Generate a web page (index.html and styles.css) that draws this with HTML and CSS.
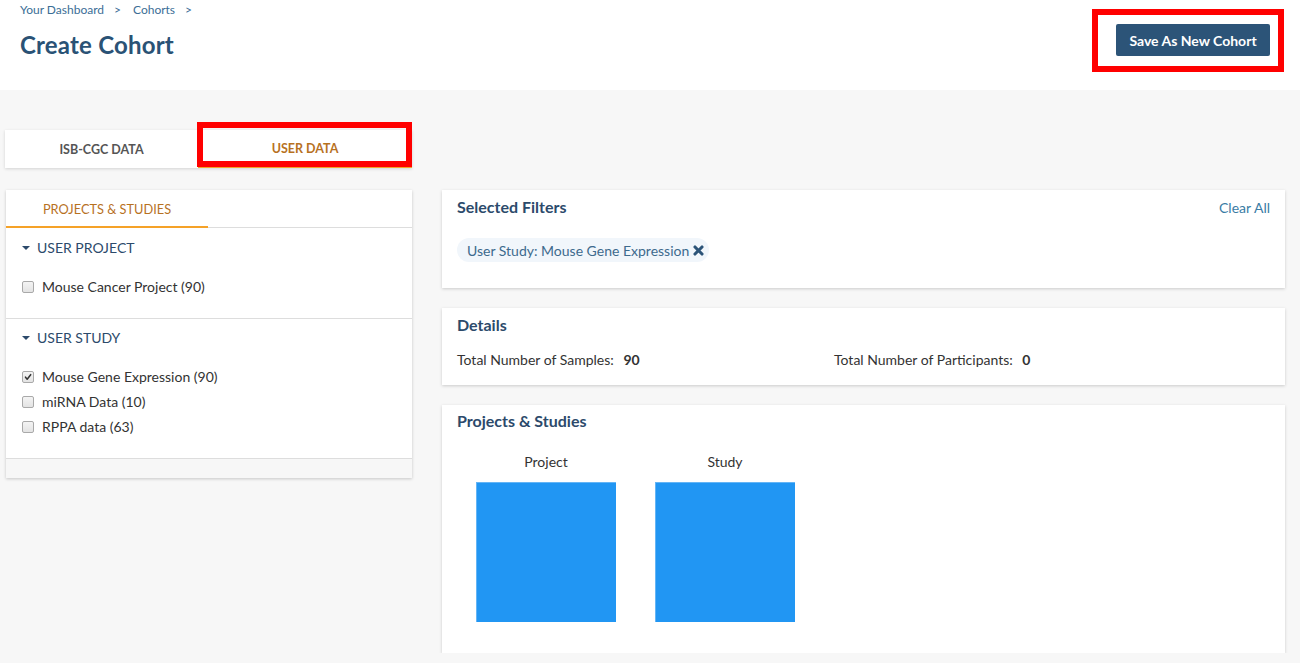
FILE: index.html
```html
<!DOCTYPE html>
<html lang="en">
<head>
<meta charset="utf-8">
<title>Create Cohort</title>
<link rel="stylesheet" href="styles.css">
</head>
<body>
<header class="page-header">
  <div class="header-left">
    <nav class="breadcrumb">
      <a href="#">Your Dashboard</a><span class="sep">&gt;</span><a href="#">Cohorts</a><span class="sep">&gt;</span>
    </nav>
    <h1 class="page-title">Create Cohort</h1>
  </div>
  <div class="header-actions">
    <button class="btn-save" type="button">Save As New Cohort</button>
  </div>
</header>

<main class="main">
  <div class="data-tabs">
    <div class="data-tab">ISB-CGC DATA</div>
    <div class="data-tab active">USER DATA</div>
  </div>

  <div class="columns">
    <section class="filter-panel">
      <div class="panel-tabs">
        <div class="panel-tab active">PROJECTS &amp; STUDIES</div>
      </div>

      <div class="filter-section">
        <div class="section-head"><span class="caret"></span>USER PROJECT</div>
        <ul class="check-list">
          <li><span class="cbox"></span>Mouse Cancer Project (90)</li>
        </ul>
      </div>

      <div class="filter-section">
        <div class="section-head"><span class="caret"></span>USER STUDY</div>
        <ul class="check-list">
          <li><span class="cbox checked"><svg viewBox="0 0 12 12" width="12" height="12"><path d="M3 6.2 L5 8.6 L9.2 3.2" fill="none" stroke="#333" stroke-width="1.8" stroke-linecap="round" stroke-linejoin="round"/></svg></span>Mouse Gene Expression (90)</li>
          <li><span class="cbox"></span>miRNA Data (10)</li>
          <li><span class="cbox"></span>RPPA data (63)</li>
        </ul>
      </div>
      <div class="panel-foot"></div>
    </section>

    <div class="right-col">
      <section class="card card-filters">
        <div class="card-head">
          <h2 class="card-title">Selected Filters</h2>
          <a href="#" class="clear-all">Clear All</a>
        </div>
        <div class="pills">
          <span class="pill">User Study: Mouse Gene Expression
            <svg class="pill-x" viewBox="0 0 10 10" width="11" height="11"><path d="M1.8 1.8 L8.2 8.2 M8.2 1.8 L1.8 8.2" stroke="#2c5478" stroke-width="2.8" stroke-linecap="round"/></svg>
          </span>
        </div>
      </section>

      <section class="card card-details">
        <h2 class="card-title">Details</h2>
        <div class="detail-row">
          <div class="detail">Total Number of Samples: <b>90</b></div>
          <div class="detail">Total Number of Participants: <b>0</b></div>
        </div>
      </section>

      <section class="card card-charts">
        <h2 class="card-title">Projects &amp; Studies</h2>
        <div class="charts">
          <figure class="chart">
            <figcaption>Project</figcaption>
            <div class="tree-box"></div>
          </figure>
          <figure class="chart">
            <figcaption>Study</figcaption>
            <div class="tree-box"></div>
          </figure>
        </div>
      </section>
    </div>
  </div>
</main>
</body>
</html>
```

FILE: styles.css
```css
* { box-sizing: border-box; }

body {
  margin: 0;
  background: #f7f7f7;
  font-family: Lato, "Open Sans", "Liberation Sans", sans-serif;
  color: #333;
  font-size: 14px;
}

a { text-decoration: none; }

.page-header {
  background: #fff;
  height: 90px;
  display: flex;
  justify-content: space-between;
  align-items: flex-start;
  padding: 0 30px 0 20px;
}

.breadcrumb {
  padding-top: 3px;
  font-size: 12px;
  line-height: 14px;
  color: #3b6e96;
}
.breadcrumb a { color: #3b6e96; }
.breadcrumb .sep { margin: 0 12px 0 10px; }

.page-title {
  margin: 13px 0 0;
  font-size: 24px;
  line-height: 30px;
  font-weight: 700;
  color: #2a5275;
  letter-spacing: 0.2px;
}

.header-actions {
  position: relative;
  margin-top: 24px;
}
.header-actions::after {
  content: "";
  position: absolute;
  left: -24px;
  right: -14px;
  top: -15px;
  bottom: -16px;
  border: 6px solid #ff0000;
  pointer-events: none;
}

.btn-save {
  display: block;
  width: 154px;
  height: 32px;
  border: 0;
  border-radius: 2px;
  background: #2c5478;
  color: #fff;
  font-family: inherit;
  font-size: 14px;
  font-weight: 700;
  padding: 0;
}

.main {
  padding: 40px 15px 0 5px;
}

.data-tabs {
  width: 407px;
  height: 38px;
  display: flex;
  background: #fff;
  box-shadow: 0 1px 3px rgba(0, 0, 0, 0.15);
}
.data-tab {
  display: flex;
  align-items: center;
  justify-content: center;
  font-size: 12.5px;
  font-weight: 700;
  color: #555;
  width: 193px;
}
.data-tab.active {
  position: relative;
  flex: 1;
  color: #b7711f;
  border-bottom: 2px solid #f5a228;
}
.data-tab.active::after {
  content: "";
  position: absolute;
  left: -1px;
  right: 0;
  top: -8px;
  bottom: -1px;
  border: 6px solid #ff0000;
  pointer-events: none;
}

.columns {
  display: flex;
  align-items: flex-start;
  gap: 30px;
  margin-top: 22px;
  padding-left: 1px;
}

.filter-panel {
  width: 406px;
  flex: none;
  background: #fff;
  box-shadow: 0 1px 3px rgba(0, 0, 0, 0.2);
}

.panel-tabs {
  height: 38px;
  border-bottom: 1px solid #ddd;
  display: flex;
}
.panel-tab {
  width: 202px;
  display: flex;
  align-items: center;
  justify-content: center;
  font-size: 12.8px;
  color: #b7711f;
  border-bottom: 2px solid #f5a228;
  margin-bottom: -1px;
  padding-top: 1px;
}

.filter-section {
  padding: 11px 16px 21px;
  border-bottom: 1px solid #ddd;
}
.filter-section + .filter-section { padding-top: 10px; }
.section-head {
  display: flex;
  align-items: center;
  font-size: 14px;
  line-height: 18px;
  color: #2c4a6b;
}
.caret {
  width: 0;
  height: 0;
  border-left: 4px solid transparent;
  border-right: 4px solid transparent;
  border-top: 4px solid #2c4a6b;
  margin: 0 7px 0 0;
}

.check-list {
  list-style: none;
  margin: 20px 0 0;
  padding: 0;
}
.check-list li {
  display: flex;
  align-items: center;
  line-height: 20px;
  height: 20px;
  margin-bottom: 5px;
  font-size: 14px;
  color: #333;
}
.check-list li:last-child { margin-bottom: 0; }

.cbox {
  width: 12px;
  height: 12px;
  border: 1px solid #a9a9a9;
  border-radius: 2px;
  background: linear-gradient(#f4f4f4, #e3e3e3);
  margin: 0 8px 0 0;
  display: flex;
  align-items: center;
  justify-content: center;
  flex: none;
}
.cbox svg { display: block; }

.panel-foot {
  height: 19px;
  background: #f7f7f7;
}

.right-col {
  flex: 1;
  display: flex;
  flex-direction: column;
  gap: 20px;
}

.card {
  background: #fff;
  box-shadow: 0 1px 3px rgba(0, 0, 0, 0.18);
  padding: 0 15px;
}

.card-title {
  margin: 0;
  font-size: 16px;
  line-height: 18px;
  font-weight: 700;
  color: #2c4a6b;
}

.card-filters {
  height: 98px;
  padding-top: 7px;
}
.card-head {
  display: flex;
  justify-content: space-between;
  align-items: center;
}
.clear-all {
  color: #3a7ca5;
  font-size: 14px;
  line-height: 18px;
  margin-top: 2px;
}
.pills {
  margin-top: 21px;
  display: flex;
}
.pill {
  display: inline-flex;
  align-items: center;
  height: 24px;
  padding: 0 5px 0 10px;
  border-radius: 12px;
  background: #f1f6fb;
  color: #3d6a8d;
  font-size: 14px;
}
.pill-x {
  margin-left: 4px;
  display: block;
}

.card-details {
  height: 77px;
  padding-top: 8px;
}
.detail-row {
  display: flex;
  margin-top: 17px;
  font-size: 14px;
  line-height: 18px;
  color: #333;
}
.detail { width: 377px; }
.detail b { margin-left: 6px; color: #333; }

.card-charts {
  height: 248px;
  padding-top: 7px;
}
.charts {
  display: flex;
  gap: 39px;
  padding-left: 19px;
  margin-top: 23px;
}
.chart {
  margin: 0;
  width: 140px;
}
.chart figcaption {
  text-align: center;
  font-size: 14px;
  line-height: 18px;
  color: #333;
}
.tree-box {
  margin-top: 11px;
  width: 140px;
  height: 140px;
  background: #2196f3;
  border-top: 1px solid #64b5f6;
  border-left: 1px solid #64b5f6;
}
```
